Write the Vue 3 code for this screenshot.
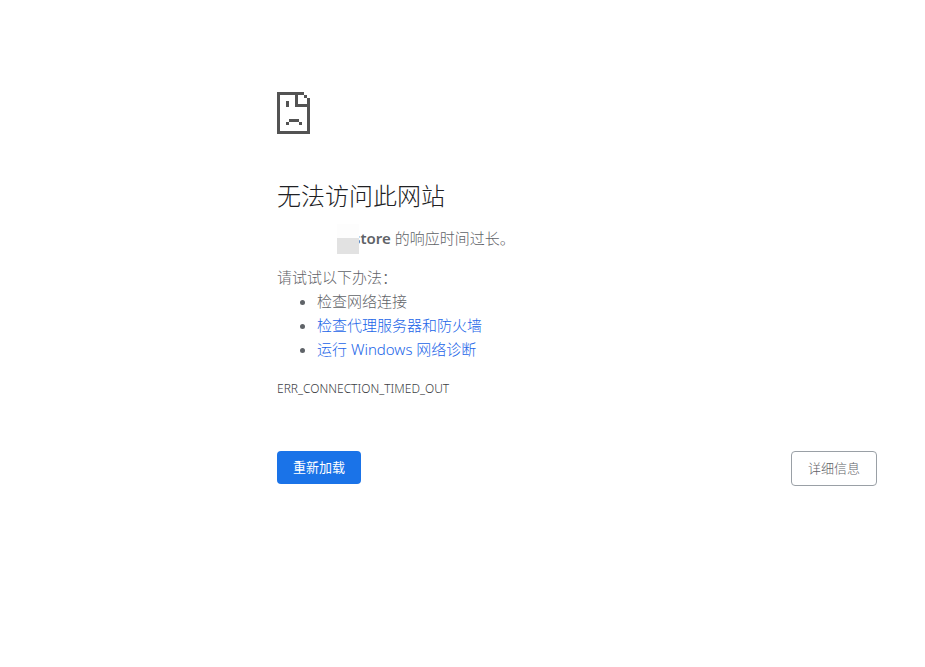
<template>
  <main class="error-page">
    <svg class="icon" viewBox="0 0 11 14" shape-rendering="crispEdges" aria-hidden="true">
      <path d="M0 0h9v1H7v3h3V2h1v12H0zM1 1v12h9V5H6V1z" fill-rule="evenodd" />
      <path d="M9 1h1v1H9zM3 3h1v2H3zM4 9h3.34v1H4zM3 10h1v1H3zM7.34 10h1v1h-1z" />
    </svg>

    <h1>无法访问此网站</h1>
    <p class="summary">
      <strong class="host">store<span class="mask"></span></strong> 的响应时间过长。
    </p>

    <div class="suggestions">
      <p>请试试以下办法：</p>
      <ul>
        <li v-for="item in suggestions" :key="item.text">
          <a v-if="item.link" href="#" @click.prevent>{{ item.text }}</a>
          <template v-else>{{ item.text }}</template>
        </li>
      </ul>
    </div>

    <div class="error-code">ERR_CONNECTION_TIMED_OUT</div>

    <div class="buttons">
      <button type="button" class="primary" @click="reload">重新加载</button>
      <button type="button" class="secondary">详细信息</button>
    </div>
  </main>
</template>

<script setup>
const suggestions = [
  { text: '检查网络连接', link: false },
  { text: '检查代理服务器和防火墙', link: true },
  { text: '运行 Windows 网络诊断', link: true }
]

function reload() {
  window.location.reload()
}
</script>

<style>
body {
  margin: 0;
  background: #fff;
}
</style>

<style scoped>
.error-page {
  box-sizing: border-box;
  max-width: 648px;
  margin-left: auto;
  padding: 92px 48px 48px 0;
  color: #5f6368;
  font-family: "Noto Sans", "Noto Sans CJK SC", sans-serif;
  font-size: 15px;
  font-weight: 300;
  line-height: 24px;
}

.icon {
  display: block;
  width: 33px;
  height: 42px;
  fill: #535353;
}

h1 {
  margin: 47px 0 15px;
  color: #202124;
  font-size: 24px;
  font-weight: 300;
  line-height: 30px;
}

p {
  margin: 0;
}

.host {
  position: relative;
  margin-left: 76px;
  font-weight: 600;
}

/* covers the first part of the host name */
.mask {
  position: absolute;
  left: -16px;
  bottom: -6px;
  width: 22px;
  height: 30px;
  background: linear-gradient(#fdfdfd 14px, #e2e2e2 14px);
}

.suggestions {
  margin-top: 15px;
}

ul {
  margin: 0;
  padding-left: 40px;
}

a {
  color: #1a64e8;
  text-decoration: none;
}

.error-code {
  margin-top: 18px;
  color: #3c4043;
  font-size: 12px;
  line-height: 20px;
}

.buttons {
  display: flex;
  align-items: flex-start;
  justify-content: space-between;
  margin-top: 52px;
}

button {
  padding: 8px 16px;
  border: 0;
  border-radius: 4px;
  font-family: inherit;
  font-size: 13px;
  line-height: 17px;
  cursor: pointer;
}

.primary {
  background: #1a73e8;
  color: #fff;
}

.secondary {
  border: 1px solid #9aa0a6;
  background: #fff;
  color: #5f6368;
  font-weight: 300;
}
</style>
